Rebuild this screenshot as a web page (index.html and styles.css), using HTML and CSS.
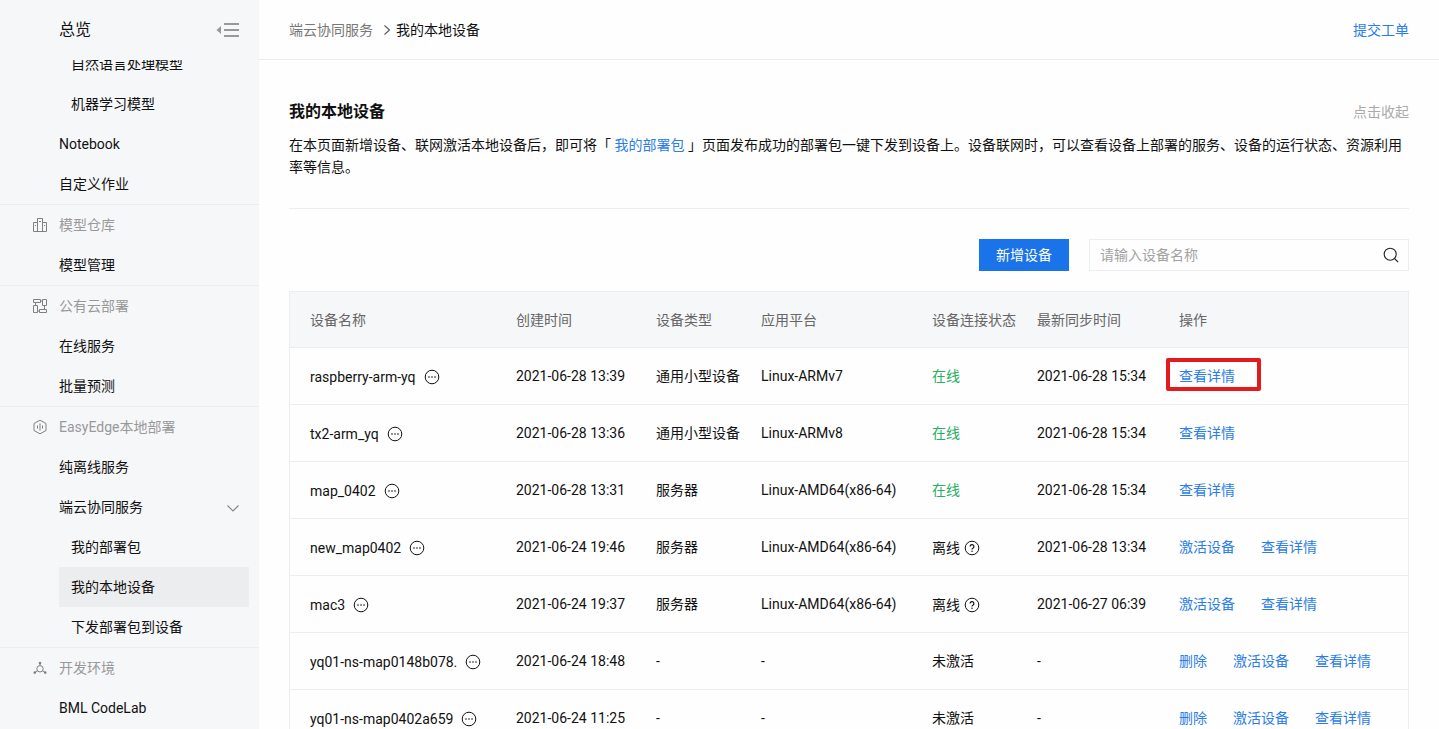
FILE: index.html
```html
<!DOCTYPE html>
<html lang="zh-CN">

<head>
    <meta charset="UTF-8">
    <meta name="viewport" content="width=device-width, initial-scale=1.0">
    <title>我的本地设备</title>
    <link rel="stylesheet" href="styles.css">
</head>

<body>
    <svg class="sprite" aria-hidden="true">
        <symbol id="icon-more" viewBox="0 0 16 16">
            <circle cx="8" cy="8" r="6.8" fill="none" stroke="currentColor" stroke-width="1" />
            <circle cx="5" cy="8" r="0.8" fill="currentColor" />
            <circle cx="8" cy="8" r="0.8" fill="currentColor" />
            <circle cx="11" cy="8" r="0.8" fill="currentColor" />
        </symbol>
        <symbol id="icon-help" viewBox="0 0 16 16">
            <circle cx="8" cy="8" r="6.8" fill="none" stroke="currentColor" stroke-width="1" />
            <path d="M6.1 6.5a1.9 1.9 0 1 1 2.8 1.7c-.6.3-.9.6-.9 1.3" fill="none" stroke="currentColor" stroke-width="1.2" />
            <circle cx="8" cy="11.2" r="0.75" fill="currentColor" />
        </symbol>
    </svg>

    <div class="layout">
        <aside class="sidebar">
            <div class="sidebar-header">
                <a href="#" class="overview">总览</a>
                <button type="button" class="icon-button" aria-label="收起菜单">
                    <svg width="24" height="16" viewBox="0 0 24 16" fill="#999">
                        <path d="M5 4v8L0.5 8z" />
                        <path d="M8 1h15v2H8zM8 7h15v2H8zM8 13h15v2H8z" />
                    </svg>
                </button>
            </div>
            <nav class="menu">
                <div class="menu-scroll">
                    <div class="menu-group">
                        <a href="#" class="menu-item sub">自然语言处理模型</a>
                        <a href="#" class="menu-item sub">机器学习模型</a>
                        <a href="#" class="menu-item">Notebook</a>
                        <a href="#" class="menu-item">自定义作业</a>
                    </div>
                    <div class="menu-group">
                        <div class="menu-title">
                            <svg width="16" height="16" viewBox="0 0 16 16" fill="none" stroke="currentColor">
                                <path d="M5.5 14.5v-13h5v13M5.5 5.5h-4v9h13v-9h-4M7 4.5h2M3 8.5h1M12 8.5h1" />
                            </svg>
                            <span>模型仓库</span>
                        </div>
                        <a href="#" class="menu-item">模型管理</a>
                    </div>
                    <div class="menu-group">
                        <div class="menu-title">
                            <svg width="16" height="16" viewBox="0 0 16 16" fill="none" stroke="currentColor">
                                <path d="M1.5 1.5h7v3h-7zM10.5 1.5h4v6h-4zM1.5 7.5h4v7h-4zM7.5 11.5h7v3h-7zM3.5 4.5v3M8.5 3h2M12.5 7.5v4M5.5 13h2" />
                            </svg>
                            <span>公有云部署</span>
                        </div>
                        <a href="#" class="menu-item">在线服务</a>
                        <a href="#" class="menu-item">批量预测</a>
                    </div>
                    <div class="menu-group">
                        <div class="menu-title">
                            <svg width="16" height="16" viewBox="0 0 16 16" fill="none" stroke="currentColor">
                                <path d="M8 1.2l6 3.3v7L8 14.8l-6-3.3v-7z" />
                                <path d="M5.5 6.5v3M8 4.5v7M10.5 6.5v3" />
                            </svg>
                            <span>EasyEdge本地部署</span>
                        </div>
                        <a href="#" class="menu-item">纯离线服务</a>
                        <a href="#" class="menu-item">
                            <span>端云协同服务</span>
                            <svg width="14" height="14" viewBox="0 0 14 14" fill="none" stroke="#888" stroke-width="1.2">
                                <path d="M1.5 5.5L7 11l5.5-5.5" />
                            </svg>
                        </a>
                        <a href="#" class="menu-item sub">我的部署包</a>
                        <a href="#" class="menu-item sub active">我的本地设备</a>
                        <a href="#" class="menu-item sub">下发部署包到设备</a>
                    </div>
                    <div class="menu-group">
                        <div class="menu-title">
                            <svg width="16" height="16" viewBox="0 0 16 16" fill="none" stroke="currentColor">
                                <circle cx="8" cy="8.8" r="3.2" />
                                <path d="M8 5.6V3.5M5.4 10.8l-2.2 1.4M10.6 10.8l2.2 1.4" />
                                <g fill="currentColor" stroke="none">
                                    <circle cx="8" cy="3" r="1.3" />
                                    <circle cx="2.8" cy="12.6" r="1.3" />
                                    <circle cx="13.2" cy="12.6" r="1.3" />
                                </g>
                            </svg>
                            <span>开发环境</span>
                        </div>
                        <a href="#" class="menu-item">BML CodeLab</a>
                    </div>
                </div>
            </nav>
        </aside>

        <main class="main">
            <header class="topbar">
                <div class="breadcrumb">
                    <a href="#" class="crumb">端云协同服务</a>
                    <svg width="8" height="12" viewBox="0 0 8 12" fill="none" stroke="#555" stroke-width="1.1">
                        <path d="M1.5 1.5L6.5 6l-5 4.5" />
                    </svg>
                    <span>我的本地设备</span>
                </div>
                <a href="#" class="link">提交工单</a>
            </header>

            <div class="content">
                <section class="intro">
                    <div class="intro-header">
                        <h1 class="title">我的本地设备</h1>
                        <button type="button" class="collapse-button">点击收起</button>
                    </div>
                    <p class="intro-text">在本页面新增设备、联网激活本地设备后，即可将「 <a href="#" class="link">我的部署包</a> 」页面发布成功的部署包一键下发到设备上。设备联网时，可以查看设备上部署的服务、设备的运行状态、资源利用率等信息。</p>
                </section>

                <form class="toolbar">
                    <button type="button" class="primary-button">新增设备</button>
                    <div class="search">
                        <input type="text" class="search-input" placeholder="请输入设备名称" aria-label="设备名称">
                        <button type="submit" class="icon-button" aria-label="搜索">
                            <svg width="16" height="16" viewBox="0 0 16 16" fill="none" stroke="#222" stroke-width="1.1">
                                <circle cx="7.2" cy="7.2" r="6" />
                                <path d="M11.5 11.5l3.6 3.6" />
                            </svg>
                        </button>
                    </div>
                </form>

                <table class="device-table">
                    <colgroup>
                        <col class="col-name">
                        <col class="col-created">
                        <col class="col-type">
                        <col class="col-platform">
                        <col class="col-status">
                        <col class="col-sync">
                        <col>
                    </colgroup>
                    <thead>
                        <tr>
                            <th>设备名称</th>
                            <th>创建时间</th>
                            <th>设备类型</th>
                            <th>应用平台</th>
                            <th>设备连接状态</th>
                            <th>最新同步时间</th>
                            <th>操作</th>
                        </tr>
                    </thead>
                    <tbody>
                        <tr>
                            <td><div class="name">raspberry-arm-yq<svg class="icon"><use href="#icon-more" /></svg></div></td>
                            <td>2021-06-28 13:39</td>
                            <td>通用小型设备</td>
                            <td>Linux-ARMv7</td>
                            <td class="online">在线</td>
                            <td>2021-06-28 15:34</td>
                            <td><div class="actions"><a href="#" class="link marked">查看详情</a></div></td>
                        </tr>
                        <tr>
                            <td><div class="name">tx2-arm_yq<svg class="icon"><use href="#icon-more" /></svg></div></td>
                            <td>2021-06-28 13:36</td>
                            <td>通用小型设备</td>
                            <td>Linux-ARMv8</td>
                            <td class="online">在线</td>
                            <td>2021-06-28 15:34</td>
                            <td><div class="actions"><a href="#" class="link">查看详情</a></div></td>
                        </tr>
                        <tr>
                            <td><div class="name">map_0402<svg class="icon"><use href="#icon-more" /></svg></div></td>
                            <td>2021-06-28 13:31</td>
                            <td>服务器</td>
                            <td>Linux-AMD64(x86-64)</td>
                            <td class="online">在线</td>
                            <td>2021-06-28 15:34</td>
                            <td><div class="actions"><a href="#" class="link">查看详情</a></div></td>
                        </tr>
                        <tr>
                            <td><div class="name">new_map0402<svg class="icon"><use href="#icon-more" /></svg></div></td>
                            <td>2021-06-24 19:46</td>
                            <td>服务器</td>
                            <td>Linux-AMD64(x86-64)</td>
                            <td><div class="status">离线<svg class="icon"><use href="#icon-help" /></svg></div></td>
                            <td>2021-06-28 13:34</td>
                            <td><div class="actions"><a href="#" class="link">激活设备</a><a href="#" class="link">查看详情</a></div></td>
                        </tr>
                        <tr>
                            <td><div class="name">mac3<svg class="icon"><use href="#icon-more" /></svg></div></td>
                            <td>2021-06-24 19:37</td>
                            <td>服务器</td>
                            <td>Linux-AMD64(x86-64)</td>
                            <td><div class="status">离线<svg class="icon"><use href="#icon-help" /></svg></div></td>
                            <td>2021-06-27 06:39</td>
                            <td><div class="actions"><a href="#" class="link">激活设备</a><a href="#" class="link">查看详情</a></div></td>
                        </tr>
                        <tr>
                            <td><div class="name">yq01-ns-map0148b078.<svg class="icon"><use href="#icon-more" /></svg></div></td>
                            <td>2021-06-24 18:48</td>
                            <td>-</td>
                            <td>-</td>
                            <td>未激活</td>
                            <td>-</td>
                            <td><div class="actions"><a href="#" class="link">删除</a><a href="#" class="link">激活设备</a><a href="#" class="link">查看详情</a></div></td>
                        </tr>
                        <tr>
                            <td><div class="name">yq01-ns-map0402a659<svg class="icon"><use href="#icon-more" /></svg></div></td>
                            <td>2021-06-24 11:25</td>
                            <td>-</td>
                            <td>-</td>
                            <td>未激活</td>
                            <td>-</td>
                            <td><div class="actions"><a href="#" class="link">删除</a><a href="#" class="link">激活设备</a><a href="#" class="link">查看详情</a></div></td>
                        </tr>
                    </tbody>
                </table>
            </div>
        </main>
    </div>
</body>

</html>
```

FILE: styles.css
```css
:root {
    --primary-color: #1a73e8;
    --link-color: #2b7de9;
    --text-color: #111;
    --muted-color: #999;
    --border-color: #ebedee;
    --panel-color: #f6f7f9;
}

* {
    margin: 0;
    padding: 0;
    box-sizing: border-box;
}

body {
    font-family: Roboto, "Noto Sans CJK SC", sans-serif;
    font-size: 14px;
    line-height: 22px;
    color: var(--text-color);
    background-color: #fefefe;
}

a {
    color: inherit;
    text-decoration: none;
}

button,
input {
    font: inherit;
    border: none;
    background: none;
}

button {
    cursor: pointer;
}

svg {
    display: block;
    flex-shrink: 0;
}

.sprite {
    position: absolute;
    width: 0;
    height: 0;
}

.layout {
    display: flex;
    height: 100vh;
    overflow: hidden;
}

/* Sidebar */
.sidebar {
    display: flex;
    flex-direction: column;
    flex: 0 0 259px;
    background-color: var(--panel-color);
}

.sidebar-header {
    display: flex;
    align-items: center;
    justify-content: space-between;
    flex: 0 0 60px;
    padding: 0 19px 0 59px;
}

.overview {
    font-size: 16px;
}

.menu {
    flex: 1;
    min-height: 0;
    overflow: hidden;
}

.menu-scroll {
    margin-top: -16px;
}

.menu-group + .menu-group {
    border-top: 1px solid var(--border-color);
}

.menu-item,
.menu-title {
    display: flex;
    align-items: center;
    height: 40px;
}

.menu-item {
    justify-content: space-between;
    margin: 0 10px 0 59px;
    padding-right: 9px;
}

.menu-item.sub {
    padding-left: 12px;
}

.menu-item.active {
    background-color: #ecedee;
}

.menu-title {
    gap: 11px;
    padding-left: 32px;
    color: var(--muted-color);
}

.menu-title svg {
    color: #808080;
}

/* Main column */
.main {
    flex: 1;
    min-width: 0;
    overflow: hidden;
}

.topbar {
    display: flex;
    align-items: center;
    justify-content: space-between;
    height: 60px;
    padding: 0 30px;
    border-bottom: 1px solid var(--border-color);
}

.breadcrumb {
    display: flex;
    align-items: center;
}

.breadcrumb svg {
    margin: 0 5px 0 10px;
}

.crumb {
    color: #777;
}

.link {
    color: var(--link-color);
}

.content {
    padding: 40px 30px 0;
}

.intro {
    padding-bottom: 30px;
    border-bottom: 1px solid var(--border-color);
}

.intro-header {
    display: flex;
    align-items: center;
    justify-content: space-between;
    margin-bottom: 10px;
}

.title {
    font-size: 16px;
    font-weight: 600;
    line-height: 24px;
}

.collapse-button {
    color: #aaa;
}

/* Toolbar */
.toolbar {
    display: flex;
    justify-content: flex-end;
    gap: 20px;
    padding: 30px 0 20px;
}

.primary-button {
    width: 90px;
    height: 32px;
    color: #fff;
    background-color: var(--primary-color);
}

.search {
    display: flex;
    align-items: center;
    width: 320px;
    height: 32px;
    padding: 0 9px 0 10px;
    border: 1px solid var(--border-color);
}

.search-input {
    flex: 1;
    min-width: 0;
    outline: none;
}

.search-input::placeholder {
    color: #a2a2a2;
}

/* Device table */
.device-table {
    width: 100%;
    table-layout: fixed;
    border: 1px solid var(--border-color);
    border-spacing: 0;
    white-space: nowrap;
}

.col-name {
    width: 206px;
}

.col-created {
    width: 140px;
}

.col-type,
.col-status {
    width: 105px;
}

.col-platform {
    width: 171px;
}

.col-sync {
    width: 142px;
}

th,
td {
    padding: 17px 0 17px 20px;
    border-bottom: 1px solid var(--border-color);
    text-align: left;
    vertical-align: middle;
}

th {
    padding: 17px 0 16px 20px;
    font-weight: 400;
    color: #666;
    background-color: var(--panel-color);
}

.name,
.status,
.actions {
    display: flex;
    align-items: center;
    height: 22px;
}

.name,
.status {
    padding-top: 2px;
}

.icon {
    width: 16px;
    height: 16px;
}

.name {
    gap: 8px;
}

.status {
    gap: 4px;
}

.actions {
    gap: 26px;
}

.online {
    color: #27ae60;
}

.marked {
    position: relative;
}

.marked::after {
    content: "";
    position: absolute;
    inset: -7px -26px -4px -13px;
    border: 4px solid #e31b1f;
    border-radius: 2px;
}
```
